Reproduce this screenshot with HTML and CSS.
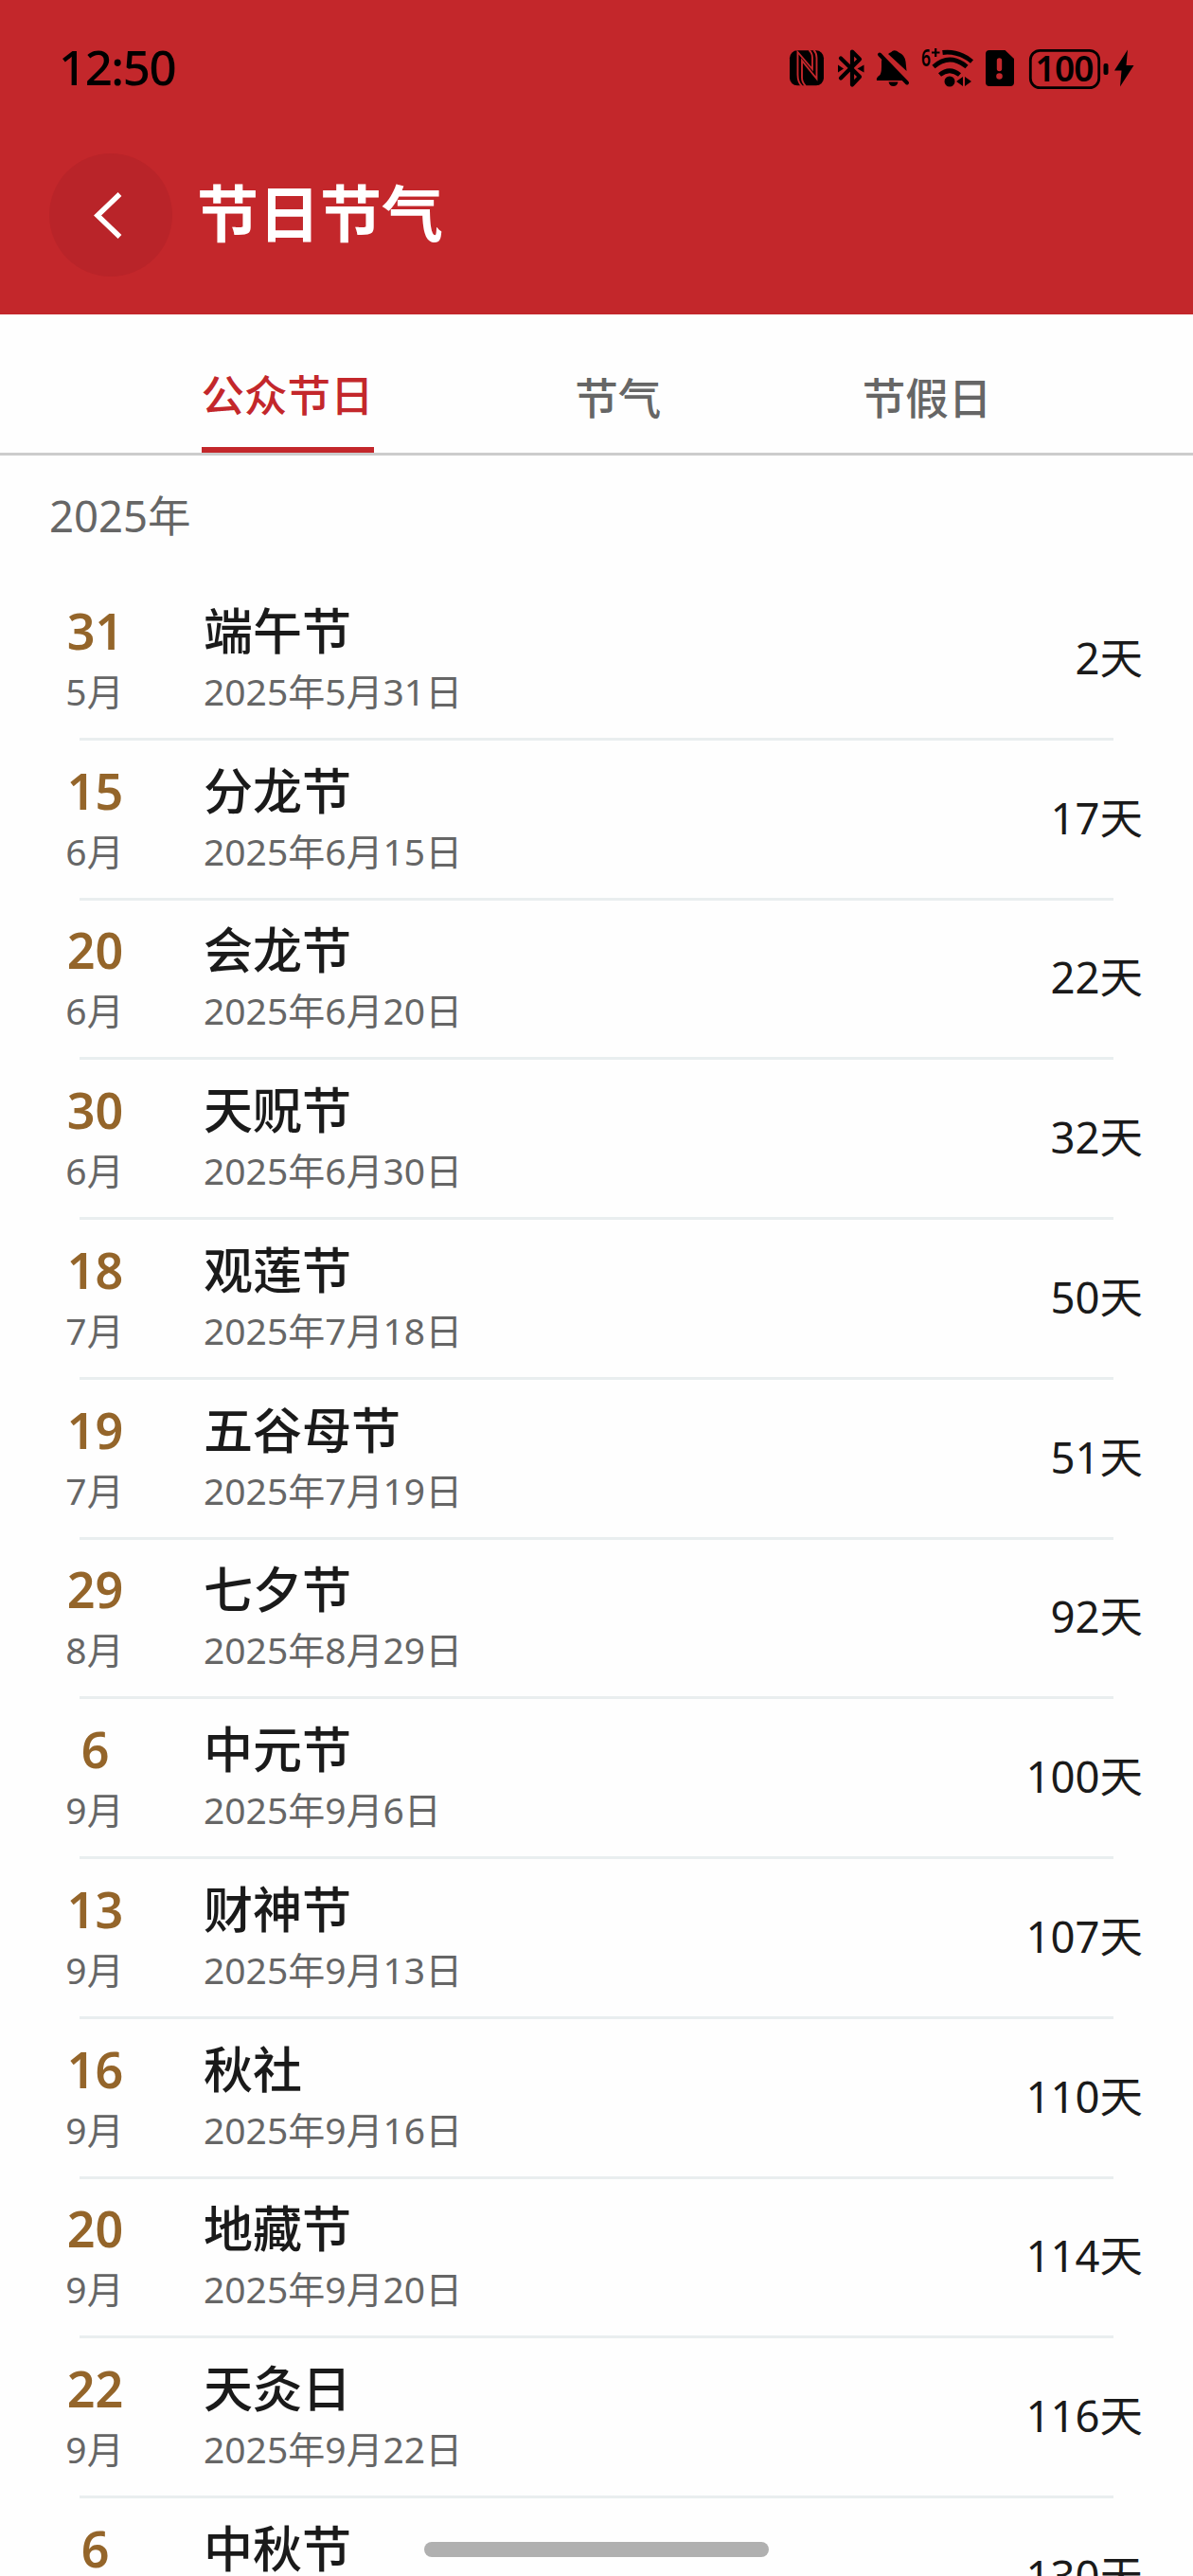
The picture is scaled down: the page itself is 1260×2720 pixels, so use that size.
FILE: index.html
```html
<!DOCTYPE html>
<html lang="zh-CN">
<head>
<meta charset="utf-8">
<title>节日节气</title>
<link rel="stylesheet" href="styles.css">
</head>
<body>
<div class="screen">
  <header class="header">
    <div class="status">
      <span class="clock">12:50</span>
      <svg class="status-icons" width="370" height="50" viewBox="830 46 370 50">
        <rect x="834" y="53.300" width="36" height="37" rx="8"/>
        <path d="M847 91Q842.500 87 842.500 79V55L858 73V61Q858 56 854.500 53M851 91Q847 87 847 82V64L862.500 83V61Q862.500 56 859.500 53" fill="none" stroke="#c3272b" stroke-width="1.900"/>
        <g fill="none" stroke="#000" stroke-width="4.200" stroke-linejoin="round" stroke-linecap="round"><path d="M888 61.500l20 19.500-8 8.500V54.500l8 8L888 82.500"/></g>
        <path d="M885 68.500l6 4-6 4zM912.500 68.500l-7 4 7 4z"/>
        <path d="M932 61l23 24h-29q-1-3 3-5.500 2-2 2-9v-6zM938 57q2-1.500 3-1.800 2.500-3 6-1.500l2.500 1.800q6 2.500 7 9.500l1 10zM938.500 86.500h10q-1 4.500-5 4.500t-5-4.500z"/>
        <path d="M929 57.500L958 87.500" fill="none" stroke="#000" stroke-width="4" stroke-linecap="round"/>
        <text class="wifi-gen" x="973" y="69.500" textLength="10" lengthAdjust="spacingAndGlyphs">6</text>
        <path d="M984 55.500h8.500M988.200 51v9" fill="none" stroke="#000" stroke-width="2.200"/>
        <g fill="none" stroke="#000" stroke-width="4.800"><path d="M995.500 55.500q17-2 31 9.500M986 70.500q17-15 35 0M992.500 79q10.500-8.500 21 0"/></g>
        <circle cx="1003" cy="86" r="5.500"/><path d="M1017 81v10l-7-5zM1019 81v10l7-5z"/>
        <path fill-rule="evenodd" d="M1045 53h16.500l9.500 9v25a4 4 0 0 1-4 4h-22a4 4 0 0 1-4-4V57a4 4 0 0 1 4-4zM1052.800 64v8.500a2.700 2.700 0 0 0 5.400 0V64a2.700 2.700 0 0 0-5.400 0zM1052.200 80.500a3.300 3.300 0 1 0 6.600 0 3.300 3.300 0 0 0-6.600 0z"/>
        <rect x="1088.300" y="53.300" width="72.400" height="39.400" rx="10" fill="none" stroke="#000" stroke-width="2.800"/>
        <text class="battery-level" x="1093.500" y="85.500" textLength="62">100</text>
        <rect x="1165.500" y="67" width="5" height="12" rx="2"/>
        <path d="M1191 52.500L1177 74.500h7.500l-1.500 17 14.500-22.500h-8z"/>
      </svg>
    </div>
    <div class="titlebar">
      <span class="back">
        <svg width="130" height="130" viewBox="0 0 130 130"><path d="M74.500 43L51 65.500 74.500 88" fill="none" stroke="#fff" stroke-width="5.500"/></svg>
      </span>
      <h1 class="title">节日节气</h1>
    </div>
  </header>
  <nav class="tabs">
    <span class="tab active">公众节日</span>
    <span class="tab">节气</span>
    <span class="tab">节假日</span>
  </nav>
  <h2 class="year">2025年</h2>
  <ul class="list">
    <li><div class="row"><b class="day">31</b><span class="month">5月</span><b class="name">端午节</b><span class="date">2025年5月31日</span><span class="count">2天</span></div></li>
    <li><div class="row"><b class="day">15</b><span class="month">6月</span><b class="name">分龙节</b><span class="date">2025年6月15日</span><span class="count">17天</span></div></li>
    <li><div class="row"><b class="day">20</b><span class="month">6月</span><b class="name">会龙节</b><span class="date">2025年6月20日</span><span class="count">22天</span></div></li>
    <li><div class="row"><b class="day">30</b><span class="month">6月</span><b class="name">天贶节</b><span class="date">2025年6月30日</span><span class="count">32天</span></div></li>
    <li><div class="row"><b class="day">18</b><span class="month">7月</span><b class="name">观莲节</b><span class="date">2025年7月18日</span><span class="count">50天</span></div></li>
    <li><div class="row"><b class="day">19</b><span class="month">7月</span><b class="name">五谷母节</b><span class="date">2025年7月19日</span><span class="count">51天</span></div></li>
    <li><div class="row"><b class="day">29</b><span class="month">8月</span><b class="name">七夕节</b><span class="date">2025年8月29日</span><span class="count">92天</span></div></li>
    <li><div class="row"><b class="day">6</b><span class="month">9月</span><b class="name">中元节</b><span class="date">2025年9月6日</span><span class="count">100天</span></div></li>
    <li><div class="row"><b class="day">13</b><span class="month">9月</span><b class="name">财神节</b><span class="date">2025年9月13日</span><span class="count">107天</span></div></li>
    <li><div class="row"><b class="day">16</b><span class="month">9月</span><b class="name">秋社</b><span class="date">2025年9月16日</span><span class="count">110天</span></div></li>
    <li><div class="row"><b class="day">20</b><span class="month">9月</span><b class="name">地藏节</b><span class="date">2025年9月20日</span><span class="count">114天</span></div></li>
    <li><div class="row"><b class="day">22</b><span class="month">9月</span><b class="name">天灸日</b><span class="date">2025年9月22日</span><span class="count">116天</span></div></li>
    <li><div class="row"><b class="day">6</b><b class="name">中秋节</b><span class="count">130天</span></div></li>
  </ul>
  <div class="home-bar"></div>
</div>
</body>
</html>
```
FILE: styles.css
```css
* { box-sizing: border-box; }
body { margin: 0; background: #fff; overflow: hidden; }
.screen {
  position: relative;
  width: 1260px;
  height: 2720px;
  overflow: hidden;
  background: #fefefe;
  color: #1a1a1a;
  font-family: "Noto Sans", "Noto Sans CJK SC", sans-serif;
}
.header { height: 332px; background: #c3272b; }
.status {
  display: flex;
  justify-content: space-between;
  height: 162px;
  padding: 46px 60px 0 62px;
  color: #000;
}
.clock { font-size: 51px; font-weight: 500; line-height: 48px; letter-spacing: -1.5px; }
.status-icons { display: block; }
.wifi-gen { font-size: 26px; font-weight: 600; }
.wifi-gen, .battery-level { font-family: "Noto Sans", sans-serif; }
.battery-level { font-size: 37px; font-weight: 600; }
.titlebar { display: flex; align-items: center; gap: 26px; padding-left: 52px; }
.back { width: 130px; height: 130px; border-radius: 50%; background: #b92429; }
.back svg { display: block; }
.title { margin: 0; padding-bottom: 4px; font-size: 65px; font-weight: 700; line-height: 126px; color: #fff; }
.tabs {
  display: flex;
  justify-content: space-evenly;
  height: 149px;
  border-bottom: 3px solid #ccc;
}
.tab { padding-top: 56px; font-size: 45.5px; font-weight: 500; line-height: 64px; color: #666; }
.tab.active { padding-top: 53px; color: #c3272b; border-bottom: 6px solid #c3272b; }
.year {
  height: 132px;
  margin: 0;
  padding: 30px 52px 0;
  font-size: 45.5px;
  font-weight: 400;
  line-height: 66px;
  color: #666;
}
.list { margin: 0; padding: 0; list-style: none; }
.list li::after { content: ""; display: block; height: 3px; margin: 0 84px; background: #e9eeef; }
.row {
  display: grid;
  grid-template-columns: 96px 1fr auto;
  grid-template-rows: 64px 64px;
  align-content: center;
  column-gap: 67px;
  height: 165.750px;
  padding: 4px 53px 0 52px;
  line-height: 64px;
}
.day { grid-area: 1 / 1; }
.month { grid-area: 2 / 1; }
.name { grid-area: 1 / 2; }
.date { grid-area: 2 / 2; }
.count { grid-area: 1 / 3 / 3 / 4; align-self: center; padding-bottom: 8px; font-size: 45.500px; }
.day, .month { text-align: center; }
.day, .name { font-size: 52px; font-weight: 500; }
.day { padding-left: 1px; font-weight: 600; color: #94652a; }
.month, .date { font-size: 39px; color: #666; }
.home-bar {
  position: absolute;
  left: 448px;
  top: 2684px;
  width: 364px;
  height: 16px;
  border-radius: 8px;
  background: #b0b0b0;
}
```
